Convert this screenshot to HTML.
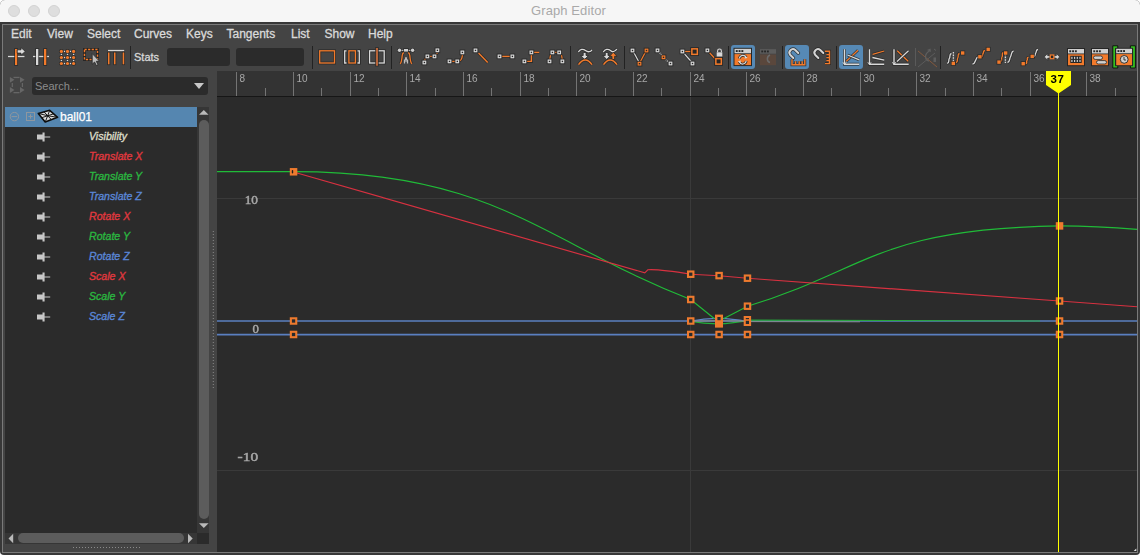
<!DOCTYPE html><html><head><meta charset="utf-8"><title>Graph Editor</title><style>
*{margin:0;padding:0;box-sizing:border-box}
html,body{width:1140px;height:555px;overflow:hidden;background:#ffffff;font-family:"Liberation Sans",sans-serif}
#win{position:absolute;left:0;top:0;width:1140px;height:555px;background:#383838;border-radius:5px 5px 4px 4px;overflow:hidden}
#title{position:absolute;left:0;top:0;width:1140px;height:22px;background:#f6f6f6}
#title .t{position:absolute;left:531px;top:3px;font-size:13px;color:#a9a9a9;letter-spacing:0.1px;white-space:nowrap}
.tl{position:absolute;top:5px;width:12px;height:12px;border-radius:50%;background:#dedede;border:1px solid #d2d2d2}
#frame{position:absolute;left:2px;top:24px;width:1136px;height:529px;border:1px solid #7a7a7a;background:#444444}
.abs{position:absolute}
.menu{position:absolute;top:27px;font-size:12px;color:#dadada;white-space:nowrap;-webkit-text-stroke:0.3px #dadada}
.field{position:absolute;background:#2b2b2b;border-radius:3px}
.sep{position:absolute;width:1.3px;background:#222222}
.row{position:absolute;left:5px;width:192px;height:20px}
.attr{position:absolute;left:89px;font:italic 10.6px "Liberation Sans",sans-serif;white-space:nowrap;-webkit-text-stroke:0.35px currentColor}
</style></head><body><div id="win">
<div id="title"><div class="tl" style="left:8px"></div><div class="tl" style="left:28px"></div><div class="tl" style="left:48px"></div><div class="t">Graph Editor</div></div>
<div id="frame"></div>
<div class="menu" style="left:11px">Edit</div>
<div class="menu" style="left:47px">View</div>
<div class="menu" style="left:87px">Select</div>
<div class="menu" style="left:134px">Curves</div>
<div class="menu" style="left:186px">Keys</div>
<div class="menu" style="left:226.5px">Tangents</div>
<div class="menu" style="left:291px">List</div>
<div class="menu" style="left:324.5px">Show</div>
<div class="menu" style="left:368px">Help</div>
<div class="sep" style="left:130px;top:46px;height:23px"></div>
<div class="sep" style="left:312px;top:46px;height:23px"></div>
<div class="sep" style="left:391px;top:46px;height:23px"></div>
<div class="sep" style="left:570px;top:46px;height:23px"></div>
<div class="sep" style="left:624px;top:46px;height:23px"></div>
<div class="sep" style="left:728px;top:46px;height:23px"></div>
<div class="sep" style="left:782px;top:46px;height:23px"></div>
<div class="sep" style="left:836px;top:46px;height:23px"></div>
<div class="sep" style="left:940px;top:46px;height:23px"></div>
<div class="abs" style="left:134px;top:51px;font-size:11px;color:#d8d8d8;-webkit-text-stroke:0.3px #d8d8d8">Stats</div>
<div class="field" style="left:167px;top:48px;width:63px;height:18px"></div>
<div class="field" style="left:236px;top:48px;width:68px;height:18px"></div>
<div class="field" style="left:32px;top:77px;width:176px;height:18px"></div>
<div class="abs" style="left:35px;top:80px;font-size:11px;color:#8c8c8c">Search...</div>
<svg class="abs" style="left:0;top:0" width="1140" height="555"><line x1="8" y1="56.5" x2="24.5" y2="56.5" stroke="#262626" stroke-opacity="0.8" stroke-width="3.1" stroke-linecap="butt"/><line x1="8" y1="56.5" x2="24.5" y2="56.5" stroke="#d9d9d9" stroke-width="1.5" stroke-linecap="butt"/><rect x="14.2" y="48.2" width="3.8000000000000003" height="17.6" fill="#262626" fill-opacity="0.8"/><rect x="15" y="49" width="2.2" height="16" fill="#f27a2b"/><path d="M17.2,49.8 L21,49.8 L21,47.6 L25.3,51.4 L21,55.2 L21,53.1 L17.2,53.1 Z" fill="#d9d9d9" stroke="#262626" stroke-width="0.8"/><line x1="33" y1="56.5" x2="49" y2="56.5" stroke="#262626" stroke-opacity="0.8" stroke-width="3.1" stroke-linecap="butt"/><line x1="33" y1="56.5" x2="49" y2="56.5" stroke="#d9d9d9" stroke-width="1.5" stroke-linecap="butt"/><rect x="35.2" y="48.2" width="3.9" height="17.6" fill="#262626" fill-opacity="0.8"/><rect x="36" y="49" width="2.3" height="16" fill="#d9d9d9"/><rect x="43.2" y="48.2" width="3.9" height="17.6" fill="#262626" fill-opacity="0.8"/><rect x="44" y="49" width="2.3" height="16" fill="#f27a2b"/><circle cx="61.4" cy="51.4" r="2.3" fill="#262626" fill-opacity="0.8"/><circle cx="61.4" cy="51.4" r="1.6" fill="#f27a2b"/><circle cx="67.5" cy="51.4" r="2.3" fill="#262626" fill-opacity="0.8"/><circle cx="67.5" cy="51.4" r="1.6" fill="#f27a2b"/><circle cx="73.6" cy="51.4" r="2.3" fill="#262626" fill-opacity="0.8"/><circle cx="73.6" cy="51.4" r="1.6" fill="#f27a2b"/><circle cx="61.4" cy="57.5" r="2.3" fill="#262626" fill-opacity="0.8"/><circle cx="61.4" cy="57.5" r="1.6" fill="#f27a2b"/><circle cx="67.5" cy="57.5" r="2.3" fill="#262626" fill-opacity="0.8"/><circle cx="67.5" cy="57.5" r="1.6" fill="#f27a2b"/><circle cx="73.6" cy="57.5" r="2.3" fill="#262626" fill-opacity="0.8"/><circle cx="73.6" cy="57.5" r="1.6" fill="#f27a2b"/><circle cx="61.4" cy="63.5" r="2.3" fill="#262626" fill-opacity="0.8"/><circle cx="61.4" cy="63.5" r="1.6" fill="#f27a2b"/><circle cx="67.5" cy="63.5" r="2.3" fill="#262626" fill-opacity="0.8"/><circle cx="67.5" cy="63.5" r="1.6" fill="#f27a2b"/><circle cx="73.6" cy="63.5" r="2.3" fill="#262626" fill-opacity="0.8"/><circle cx="73.6" cy="63.5" r="1.6" fill="#f27a2b"/><rect x="63.9" y="50.8" width="1.2" height="1.2" fill="#d9d9d9"/><rect x="69.9" y="50.8" width="1.2" height="1.2" fill="#d9d9d9"/><rect x="63.9" y="62.9" width="1.2" height="1.2" fill="#d9d9d9"/><rect x="69.9" y="62.9" width="1.2" height="1.2" fill="#d9d9d9"/><rect x="60.8" y="53.8" width="1.2" height="1.2" fill="#d9d9d9"/><rect x="66.9" y="53.8" width="1.2" height="1.2" fill="#d9d9d9"/><rect x="73.0" y="53.8" width="1.2" height="1.2" fill="#d9d9d9"/><rect x="60.8" y="59.9" width="1.2" height="1.2" fill="#d9d9d9"/><rect x="66.9" y="59.9" width="1.2" height="1.2" fill="#d9d9d9"/><rect x="73.0" y="59.9" width="1.2" height="1.2" fill="#d9d9d9"/><rect x="63.9" y="56.9" width="1.2" height="1.2" fill="#d9d9d9"/><rect x="69.9" y="56.9" width="1.2" height="1.2" fill="#d9d9d9"/><rect x="84.5" y="49.5" width="13" height="10" fill="none" stroke="#262626" stroke-width="3"/><rect x="84.5" y="49.5" width="13" height="10" fill="none" stroke="#f27a2b" stroke-width="1.4" stroke-dasharray="2.2,1.4"/><path d="M92.2,53.6 L92.2,64.2 L94.6,62 L96.4,65.6 L98,64.8 L96.3,61.3 L99.4,61.1 Z" fill="#bdbdbd" stroke="#262626" stroke-width="0.8"/><line x1="108" y1="50.6" x2="124.2" y2="50.6" stroke="#262626" stroke-opacity="0.8" stroke-width="3.1" stroke-linecap="butt"/><line x1="108" y1="50.6" x2="124.2" y2="50.6" stroke="#d9d9d9" stroke-width="1.5" stroke-linecap="butt"/><rect x="107.2" y="51.7" width="3.1" height="13.4" fill="#262626" fill-opacity="0.8"/><rect x="108" y="52.5" width="1.5" height="11.8" fill="#f27a2b"/><rect x="113.2" y="51.7" width="3.1" height="13.4" fill="#262626" fill-opacity="0.8"/><rect x="114" y="52.5" width="1.5" height="11.8" fill="#f27a2b"/><rect x="121.9" y="51.7" width="3.1" height="13.4" fill="#262626" fill-opacity="0.8"/><rect x="122.7" y="52.5" width="1.5" height="11.8" fill="#f27a2b"/><rect x="319.7" y="50.8" width="14.8" height="12.2" fill="none" stroke="#262626" stroke-opacity="0.8" stroke-width="2.9000000000000004"/><rect x="319.7" y="50.8" width="14.8" height="12.2" fill="none" stroke="#f27a2b" stroke-width="1.3"/><path d="M346.5,50.8 L344.7,50.8 L344.7,63 L346.5,63 M357.5,50.8 L359.3,50.8 L359.3,63 L357.5,63" fill="none" stroke="#262626" stroke-width="2.9"/><path d="M346.5,50.8 L344.7,50.8 L344.7,63 L346.5,63 M357.5,50.8 L359.3,50.8 L359.3,63 L357.5,63" fill="none" stroke="#d9d9d9" stroke-width="1.3"/><rect x="348.9" y="50.8" width="6.5" height="12.2" fill="none" stroke="#262626" stroke-opacity="0.8" stroke-width="2.9000000000000004"/><rect x="348.9" y="50.8" width="6.5" height="12.2" fill="none" stroke="#f27a2b" stroke-width="1.3"/><rect x="369.6" y="50.8" width="14.6" height="12.2" fill="none" stroke="#262626" stroke-opacity="0.8" stroke-width="2.9000000000000004"/><rect x="369.6" y="50.8" width="14.6" height="12.2" fill="none" stroke="#d9d9d9" stroke-width="1.3"/><rect x="375.09999999999997" y="47.2" width="3.7" height="19.3" fill="#262626" fill-opacity="0.8"/><rect x="375.9" y="48" width="2.1" height="17.7" fill="#b8653a"/><path d="M400.3,63.8 C401.5,62 402,58 402.2,55.5 C402.4,53.5 403.2,52.6 404,52.3" fill="none" stroke="#262626" stroke-opacity="0.8" stroke-width="2.9000000000000004" stroke-linecap="butt"/><path d="M400.3,63.8 C401.5,62 402,58 402.2,55.5 C402.4,53.5 403.2,52.6 404,52.3" fill="none" stroke="#f27a2b" stroke-width="1.3" stroke-linecap="butt"/><path d="M411.7,63.8 C410.5,62 410,58 409.8,55.5 C409.6,53.5 408.8,52.6 408,52.3" fill="none" stroke="#262626" stroke-opacity="0.8" stroke-width="2.9000000000000004" stroke-linecap="butt"/><path d="M411.7,63.8 C410.5,62 410,58 409.8,55.5 C409.6,53.5 408.8,52.6 408,52.3" fill="none" stroke="#f27a2b" stroke-width="1.3" stroke-linecap="butt"/><line x1="400" y1="50.3" x2="412" y2="50.3" stroke="#262626" stroke-opacity="0.8" stroke-width="2.6" stroke-linecap="butt"/><line x1="400" y1="50.3" x2="412" y2="50.3" stroke="#d9d9d9" stroke-width="1.0" stroke-linecap="butt"/><circle cx="399.5" cy="50.3" r="2.4" fill="#262626" fill-opacity="0.8"/><circle cx="399.5" cy="50.3" r="1.7" fill="#cfcfcf"/><circle cx="412.6" cy="50.3" r="2.4" fill="#262626" fill-opacity="0.8"/><circle cx="412.6" cy="50.3" r="1.7" fill="#cfcfcf"/><rect x="403.2" y="48.2" width="5.6" height="4.2" fill="#262626" fill-opacity="0.8"/><rect x="404" y="49" width="4" height="2.6" fill="#cfcfcf"/><path d="M404.5,63.5 L404.5,60.5 L406,58.5 L407.5,60.5 L407.5,63.5 M405,61 L407,61" fill="none" stroke="#bdbdbd" stroke-width="1.2"/><rect x="405.2" y="57.2" width="1.6" height="1.8" fill="#bdbdbd"/><path d="M424.6,60.5 C424.8,59 425.5,58 426.5,57.2" fill="none" stroke="#262626" stroke-opacity="0.8" stroke-width="2.9000000000000004" stroke-linecap="butt"/><path d="M424.6,60.5 C424.8,59 425.5,58 426.5,57.2" fill="none" stroke="#f27a2b" stroke-width="1.3" stroke-linecap="butt"/><line x1="429.3" y1="56.4" x2="432.6" y2="56.4" stroke="#262626" stroke-opacity="0.8" stroke-width="2.9000000000000004" stroke-linecap="butt"/><line x1="429.3" y1="56.4" x2="432.6" y2="56.4" stroke="#f27a2b" stroke-width="1.3" stroke-linecap="butt"/><path d="M436.3,54.3 C437,53.7 437.3,53 437.5,52.4" fill="none" stroke="#262626" stroke-opacity="0.8" stroke-width="2.9000000000000004" stroke-linecap="butt"/><path d="M436.3,54.3 C437,53.7 437.3,53 437.5,52.4" fill="none" stroke="#f27a2b" stroke-width="1.3" stroke-linecap="butt"/><rect x="421.6" y="59.7" width="5.6" height="5.6" fill="#262626" fill-opacity="0.85"/><rect x="422.5" y="60.6" width="3.8" height="3.8" fill="#d9d9d9"/><rect x="423.7" y="61.8" width="1.4" height="1.4" fill="#262626"/><rect x="424.6" y="53.6" width="5.6" height="5.6" fill="#262626" fill-opacity="0.85"/><rect x="425.5" y="54.5" width="3.8" height="3.8" fill="#d9d9d9"/><rect x="426.7" y="55.699999999999996" width="1.4" height="1.4" fill="#262626"/><rect x="431.70000000000005" y="53.6" width="5.6" height="5.6" fill="#262626" fill-opacity="0.85"/><rect x="432.6" y="54.5" width="3.8" height="3.8" fill="#d9d9d9"/><rect x="433.8" y="55.699999999999996" width="1.4" height="1.4" fill="#262626"/><rect x="434.6" y="47.5" width="5.6" height="5.6" fill="#262626" fill-opacity="0.85"/><rect x="435.5" y="48.4" width="3.8" height="3.8" fill="#d9d9d9"/><rect x="436.7" y="49.599999999999994" width="1.4" height="1.4" fill="#262626"/><line x1="451.8" y1="61.4" x2="455" y2="61.4" stroke="#262626" stroke-opacity="0.8" stroke-width="2.9000000000000004" stroke-linecap="butt"/><line x1="451.8" y1="61.4" x2="455" y2="61.4" stroke="#f27a2b" stroke-width="1.3" stroke-linecap="butt"/><path d="M459.5,61 C461.5,60 462.3,57 462.4,54.5" fill="none" stroke="#262626" stroke-opacity="0.8" stroke-width="2.9000000000000004" stroke-linecap="butt"/><path d="M459.5,61 C461.5,60 462.3,57 462.4,54.5" fill="none" stroke="#f27a2b" stroke-width="1.3" stroke-linecap="butt"/><rect x="446.70000000000005" y="58.6" width="5.6" height="5.6" fill="#262626" fill-opacity="0.85"/><rect x="447.6" y="59.5" width="3.8" height="3.8" fill="#d9d9d9"/><rect x="448.8" y="60.699999999999996" width="1.4" height="1.4" fill="#262626"/><rect x="454.50000000000006" y="58.6" width="5.6" height="5.6" fill="#262626" fill-opacity="0.85"/><rect x="455.40000000000003" y="59.5" width="3.8" height="3.8" fill="#d9d9d9"/><rect x="456.6" y="60.699999999999996" width="1.4" height="1.4" fill="#262626"/><rect x="459.6" y="49.6" width="5.6" height="5.6" fill="#262626" fill-opacity="0.85"/><rect x="460.5" y="50.5" width="3.8" height="3.8" fill="#d9d9d9"/><rect x="461.7" y="51.699999999999996" width="1.4" height="1.4" fill="#262626"/><line x1="478.5" y1="53" x2="487.7" y2="62.5" stroke="#262626" stroke-opacity="0.8" stroke-width="3.0" stroke-linecap="butt"/><line x1="478.5" y1="53" x2="487.7" y2="62.5" stroke="#f27a2b" stroke-width="1.4" stroke-linecap="butt"/><rect x="472.70000000000005" y="47.6" width="5.6" height="5.6" fill="#262626" fill-opacity="0.85"/><rect x="473.6" y="48.5" width="3.8" height="3.8" fill="#d9d9d9"/><rect x="474.8" y="49.699999999999996" width="1.4" height="1.4" fill="#262626"/><line x1="501.7" y1="56.4" x2="510.2" y2="56.4" stroke="#262626" stroke-opacity="0.8" stroke-width="3.0" stroke-linecap="butt"/><line x1="501.7" y1="56.4" x2="510.2" y2="56.4" stroke="#f27a2b" stroke-width="1.4" stroke-linecap="butt"/><rect x="496.70000000000005" y="53.6" width="5.6" height="5.6" fill="#262626" fill-opacity="0.85"/><rect x="497.6" y="54.5" width="3.8" height="3.8" fill="#d9d9d9"/><rect x="498.8" y="55.699999999999996" width="1.4" height="1.4" fill="#262626"/><rect x="509.6" y="53.6" width="5.6" height="5.6" fill="#262626" fill-opacity="0.85"/><rect x="510.5" y="54.5" width="3.8" height="3.8" fill="#d9d9d9"/><rect x="511.7" y="55.699999999999996" width="1.4" height="1.4" fill="#262626"/><path d="M526.6,61.4 L531.4,61.4 L531.4,54.6" fill="none" stroke="#262626" stroke-opacity="0.8" stroke-width="3.0" stroke-linecap="butt"/><path d="M526.6,61.4 L531.4,61.4 L531.4,54.6" fill="none" stroke="#f27a2b" stroke-width="1.4" stroke-linecap="butt"/><line x1="534" y1="52.4" x2="539.2" y2="52.4" stroke="#262626" stroke-opacity="0.8" stroke-width="3.0" stroke-linecap="butt"/><line x1="534" y1="52.4" x2="539.2" y2="52.4" stroke="#f27a2b" stroke-width="1.4" stroke-linecap="butt"/><rect x="521.6" y="58.6" width="5.6" height="5.6" fill="#262626" fill-opacity="0.85"/><rect x="522.5" y="59.5" width="3.8" height="3.8" fill="#d9d9d9"/><rect x="523.6999999999999" y="60.699999999999996" width="1.4" height="1.4" fill="#262626"/><rect x="528.6" y="49.6" width="5.6" height="5.6" fill="#262626" fill-opacity="0.85"/><rect x="529.5" y="50.5" width="3.8" height="3.8" fill="#d9d9d9"/><rect x="530.6999999999999" y="51.699999999999996" width="1.4" height="1.4" fill="#262626"/><line x1="549.8" y1="59.2" x2="550.6" y2="54.8" stroke="#262626" stroke-opacity="0.8" stroke-width="2.8" stroke-linecap="butt"/><line x1="549.8" y1="59.2" x2="550.6" y2="54.8" stroke="#f27a2b" stroke-width="1.2" stroke-linecap="butt"/><line x1="554.7" y1="52.4" x2="557" y2="52.4" stroke="#262626" stroke-opacity="0.8" stroke-width="2.9000000000000004" stroke-linecap="butt"/><line x1="554.7" y1="52.4" x2="557" y2="52.4" stroke="#f27a2b" stroke-width="1.3" stroke-linecap="butt"/><line x1="561.5" y1="54.8" x2="562.2" y2="59.2" stroke="#262626" stroke-opacity="0.8" stroke-width="2.8" stroke-linecap="butt"/><line x1="561.5" y1="54.8" x2="562.2" y2="59.2" stroke="#f27a2b" stroke-width="1.2" stroke-linecap="butt"/><rect x="546.7" y="58.6" width="5.6" height="5.6" fill="#262626" fill-opacity="0.85"/><rect x="547.6" y="59.5" width="3.8" height="3.8" fill="#d9d9d9"/><rect x="548.8" y="60.699999999999996" width="1.4" height="1.4" fill="#262626"/><rect x="549.6" y="49.6" width="5.6" height="5.6" fill="#262626" fill-opacity="0.85"/><rect x="550.5" y="50.5" width="3.8" height="3.8" fill="#d9d9d9"/><rect x="551.6999999999999" y="51.699999999999996" width="1.4" height="1.4" fill="#262626"/><rect x="556.4000000000001" y="49.6" width="5.6" height="5.6" fill="#262626" fill-opacity="0.85"/><rect x="557.3000000000001" y="50.5" width="3.8" height="3.8" fill="#d9d9d9"/><rect x="558.5" y="51.699999999999996" width="1.4" height="1.4" fill="#262626"/><rect x="559.6" y="58.6" width="5.6" height="5.6" fill="#262626" fill-opacity="0.85"/><rect x="560.5" y="59.5" width="3.8" height="3.8" fill="#d9d9d9"/><rect x="561.6999999999999" y="60.699999999999996" width="1.4" height="1.4" fill="#262626"/><path d="M578.4,52 C580,49 583,48.5 585.5,50.5 C588,52.5 590.5,52 592,49.8" fill="none" stroke="#262626" stroke-opacity="0.8" stroke-width="2.9000000000000004" stroke-linecap="butt"/><path d="M578.4,52 C580,49 583,48.5 585.5,50.5 C588,52.5 590.5,52 592,49.8" fill="none" stroke="#d9d9d9" stroke-width="1.3" stroke-linecap="butt"/><path d="M583.2,52.5 L586,52.5 L586,55.5 L588.5,55.5 L584.6,59.5 L580.7,55.5 L583.2,55.5 Z" fill="#d9d9d9" stroke="#262626" stroke-width="0.8"/><path d="M578.5,64.6 Q585.3,55.5 592,64.6" fill="none" stroke="#262626" stroke-opacity="0.8" stroke-width="3.1" stroke-linecap="butt"/><path d="M578.5,64.6 Q585.3,55.5 592,64.6" fill="none" stroke="#f27a2b" stroke-width="1.5" stroke-linecap="butt"/><path d="M603.3,52 C605,49 608,48.5 610.5,50.5 C612,52 613,52.3 614.5,51" fill="none" stroke="#262626" stroke-opacity="0.8" stroke-width="2.9000000000000004" stroke-linecap="butt"/><path d="M603.3,52 C605,49 608,48.5 610.5,50.5 C612,52 613,52.3 614.5,51" fill="none" stroke="#d9d9d9" stroke-width="1.3" stroke-linecap="butt"/><line x1="614.5" y1="51" x2="617" y2="49.2" stroke="#262626" stroke-opacity="0.8" stroke-width="2.7" stroke-linecap="butt"/><line x1="614.5" y1="51" x2="617" y2="49.2" stroke="#d9d9d9" stroke-width="1.1" stroke-linecap="butt"/><path d="M605.3,52.5 L608,52.5 L608,55.5 L610.5,55.5 L606.7,59.5 L602.8,55.5 L605.3,55.5 Z" fill="#d9d9d9" stroke="#262626" stroke-width="0.8"/><path d="M612,59.5 L614.6,59.5 L614.6,56.3 L617,56.3 L613.3,52.3 L609.5,56.3 L612,56.3 Z" fill="#f27a2b" stroke="#262626" stroke-width="0.8"/><path d="M603.5,64.6 Q610.3,55.5 617,64.6" fill="none" stroke="#262626" stroke-opacity="0.8" stroke-width="3.1" stroke-linecap="butt"/><path d="M603.5,64.6 Q610.3,55.5 617,64.6" fill="none" stroke="#f27a2b" stroke-width="1.5" stroke-linecap="butt"/><line x1="633.8" y1="52.5" x2="638.8" y2="61.8" stroke="#262626" stroke-opacity="0.8" stroke-width="2.8" stroke-linecap="butt"/><line x1="633.8" y1="52.5" x2="638.8" y2="61.8" stroke="#d9d9d9" stroke-width="1.2" stroke-linecap="butt"/><line x1="640.3" y1="61.8" x2="645.2" y2="52.5" stroke="#262626" stroke-opacity="0.8" stroke-width="2.8" stroke-linecap="butt"/><line x1="640.3" y1="61.8" x2="645.2" y2="52.5" stroke="#f27a2b" stroke-width="1.2" stroke-linecap="butt"/><rect x="629.7" y="47.7" width="5.6" height="5.6" fill="#262626" fill-opacity="0.85"/><rect x="630.6" y="48.6" width="3.8" height="3.8" fill="#d9d9d9"/><rect x="631.8" y="49.8" width="1.4" height="1.4" fill="#262626"/><rect x="643.7" y="47.7" width="5.6" height="5.6" fill="#262626" fill-opacity="0.85"/><rect x="644.6" y="48.6" width="3.8" height="3.8" fill="#f27a2b"/><rect x="645.8" y="49.8" width="1.4" height="1.4" fill="#262626"/><rect x="636.7" y="60.900000000000006" width="5.6" height="5.6" fill="#262626" fill-opacity="0.85"/><rect x="637.6" y="61.800000000000004" width="3.8" height="3.8" fill="#f27a2b"/><rect x="638.8" y="63.0" width="1.4" height="1.4" fill="#262626"/><path d="M659.5,52.5 L661.8,55.3 M665.3,59.3 L668.6,62" stroke="#d9d9d9" stroke-width="1.2" stroke-dasharray="1.3,0.9"/><rect x="654.7" y="47.6" width="5.6" height="5.6" fill="#262626" fill-opacity="0.85"/><rect x="655.6" y="48.5" width="3.8" height="3.8" fill="#d9d9d9"/><rect x="656.8" y="49.699999999999996" width="1.4" height="1.4" fill="#262626"/><rect x="660.7" y="54.5" width="5.6" height="5.6" fill="#262626" fill-opacity="0.85"/><rect x="661.6" y="55.4" width="3.8" height="3.8" fill="#f27a2b"/><rect x="662.8" y="56.599999999999994" width="1.4" height="1.4" fill="#262626"/><rect x="667.7" y="60.7" width="5.6" height="5.6" fill="#262626" fill-opacity="0.85"/><rect x="668.6" y="61.6" width="3.8" height="3.8" fill="#d9d9d9"/><rect x="669.8" y="62.8" width="1.4" height="1.4" fill="#262626"/><line x1="684.8" y1="51.5" x2="691.3" y2="51.5" stroke="#262626" stroke-opacity="0.8" stroke-width="2.9000000000000004" stroke-linecap="butt"/><line x1="684.8" y1="51.5" x2="691.3" y2="51.5" stroke="#f27a2b" stroke-width="1.3" stroke-linecap="butt"/><line x1="684" y1="53.4" x2="691.3" y2="61.6" stroke="#262626" stroke-opacity="0.8" stroke-width="2.9000000000000004" stroke-linecap="butt"/><line x1="684" y1="53.4" x2="691.3" y2="61.6" stroke="#d9d9d9" stroke-width="1.3" stroke-linecap="butt"/><rect x="679.6" y="48.7" width="5.6" height="5.6" fill="#262626" fill-opacity="0.85"/><rect x="680.5" y="49.6" width="3.8" height="3.8" fill="#d9d9d9"/><rect x="681.6999999999999" y="50.8" width="1.4" height="1.4" fill="#262626"/><rect x="689.7" y="60.7" width="5.6" height="5.6" fill="#262626" fill-opacity="0.85"/><rect x="690.6" y="61.6" width="3.8" height="3.8" fill="#d9d9d9"/><rect x="691.8" y="62.8" width="1.4" height="1.4" fill="#262626"/><rect x="691.85" y="48.85" width="5.5" height="5.5" fill="none" stroke="#262626" stroke-width="3.2"/><rect x="691.85" y="48.85" width="5.5" height="5.5" fill="#262626" stroke="#f27a2b" stroke-width="1.5"/><line x1="709.2" y1="52.2" x2="715.3" y2="59" stroke="#262626" stroke-opacity="0.8" stroke-width="2.9000000000000004" stroke-linecap="butt"/><line x1="709.2" y1="52.2" x2="715.3" y2="59" stroke="#f27a2b" stroke-width="1.3" stroke-linecap="butt"/><rect x="704.6" y="47.6" width="5.6" height="5.6" fill="#262626" fill-opacity="0.85"/><rect x="705.5" y="48.5" width="3.8" height="3.8" fill="#d9d9d9"/><rect x="706.6999999999999" y="49.699999999999996" width="1.4" height="1.4" fill="#262626"/><rect x="715.85" y="58.65" width="5.5" height="5.5" fill="none" stroke="#262626" stroke-width="3.2"/><rect x="715.85" y="58.65" width="5.5" height="5.5" fill="#262626" stroke="#f27a2b" stroke-width="1.5"/><path d="M717.6,52.3 L717.6,50.9 A1.9,1.9 0 0 1 721.4,50.9 L721.4,52.3" fill="none" stroke="#d9d9d9" stroke-width="1.1"/><rect x="716.7" y="52.3" width="5.6" height="4.2" fill="#d9d9d9"/><rect x="731" y="45" width="24" height="24" rx="3" fill="#5689b5"/><rect x="785" y="45" width="24" height="24" rx="3" fill="#5689b5"/><rect x="839" y="45" width="24" height="24" rx="3" fill="#5689b5"/><rect x="733.5" y="47.8" width="18.5" height="18.3" fill="#262626"/><rect x="734.5" y="48.8" width="16.5" height="4.5" fill="#cfcfcf"/><rect x="734.5" y="54.099999999999994" width="16.5" height="11.0" fill="#f27a2b"/><rect x="735.8" y="50.099999999999994" width="1.9" height="1.9" fill="#262626"/><rect x="738.5999999999999" y="50.099999999999994" width="1.9" height="1.9" fill="#262626"/><rect x="741.4" y="50.099999999999994" width="1.9" height="1.9" fill="#262626"/><path d="M739.4,58.5 A3.6,3.6 0 0 1 746.2,57.4 M746.2,60.8 A3.6,3.6 0 0 1 739.3,61.8" fill="none" stroke="#262626" stroke-width="2.6"/><path d="M739.4,58.5 A3.6,3.6 0 0 1 746.2,57.4 M746.2,60.8 A3.6,3.6 0 0 1 739.3,61.8" fill="none" stroke="#d9d9d9" stroke-width="1.2"/><path d="M745,55.6 L747.6,57.9 L744.6,58.6 Z M740.5,63.6 L737.9,61.3 L740.9,60.6 Z" fill="#d9d9d9"/><rect x="760" y="49.2" width="16" height="4.5" fill="#5c5c5c"/><rect x="760" y="54.5" width="16" height="10.7" fill="#5a473c"/><rect x="761.3" y="50.5" width="1.9" height="1.9" fill="#262626"/><rect x="764.0999999999999" y="50.5" width="1.9" height="1.9" fill="#262626"/><rect x="766.9" y="50.5" width="1.9" height="1.9" fill="#262626"/><path d="M770,55 C766.5,56.5 766.5,61.5 770,62.5" fill="none" stroke="#6a6a6a" stroke-width="1.5"/><path d="M793.37,58.01 L790.33,54.97 A3.5,3.5 0 0 1 795.27,50.03 L798.31,53.07" fill="none" stroke="#262626" stroke-opacity="0.85" stroke-width="3.6" stroke-linecap="round"/><path d="M793.37,58.01 L790.33,54.97 A3.5,3.5 0 0 1 795.27,50.03 L798.31,53.07" fill="none" stroke="#d4d4d4" stroke-width="2" stroke-linecap="round"/><path d="M792,59.2 L792,64.8 L804.8,64.8 L804.8,59.2 M795.6,64.8 L795.6,61.2 M799.2,64.8 L799.2,61.2 M802.2,64.8 L802.2,61.2" fill="none" stroke="#262626" stroke-opacity="0.8" stroke-width="3.0" stroke-linecap="butt"/><path d="M792,59.2 L792,64.8 L804.8,64.8 L804.8,59.2 M795.6,64.8 L795.6,61.2 M799.2,64.8 L799.2,61.2 M802.2,64.8 L802.2,61.2" fill="none" stroke="#f27a2b" stroke-width="1.4" stroke-linecap="butt"/><path d="M818.37,58.01 L815.33,54.97 A3.5,3.5 0 0 1 820.27,50.03 L823.31,53.07" fill="none" stroke="#262626" stroke-opacity="0.85" stroke-width="3.6" stroke-linecap="round"/><path d="M818.37,58.01 L815.33,54.97 A3.5,3.5 0 0 1 820.27,50.03 L823.31,53.07" fill="none" stroke="#d4d4d4" stroke-width="2" stroke-linecap="round"/><path d="M825,51.2 L829.5,51.2 L829.5,63.6 L825,63.6 M829.5,54.6 L826.4,54.6 M829.5,57.6 L826.4,57.6 M829.5,60.6 L826.4,60.6" fill="none" stroke="#262626" stroke-opacity="0.8" stroke-width="3.0" stroke-linecap="butt"/><path d="M825,51.2 L829.5,51.2 L829.5,63.6 L825,63.6 M829.5,54.6 L826.4,54.6 M829.5,57.6 L826.4,57.6 M829.5,60.6 L826.4,60.6" fill="none" stroke="#f27a2b" stroke-width="1.4" stroke-linecap="butt"/><path d="M844.5,49.2 L844.5,64.3 L859.2,64.3" fill="none" stroke="#262626" stroke-opacity="0.8" stroke-width="3.0" stroke-linecap="butt"/><path d="M844.5,49.2 L844.5,64.3 L859.2,64.3" fill="none" stroke="#d9d9d9" stroke-width="1.4" stroke-linecap="butt"/><path d="M842.9,62.3 L844.5,64.5 L846.1,62.3" fill="none" stroke="#d9d9d9" stroke-width="1"/><line x1="846.3" y1="61.2" x2="858" y2="50.3" stroke="#262626" stroke-opacity="0.8" stroke-width="2.8" stroke-linecap="butt"/><line x1="846.3" y1="61.2" x2="858" y2="50.3" stroke="#f27a2b" stroke-width="1.2" stroke-linecap="butt"/><line x1="847.5" y1="55" x2="859.3" y2="59.8" stroke="#262626" stroke-opacity="0.8" stroke-width="2.9000000000000004" stroke-linecap="butt"/><line x1="847.5" y1="55" x2="859.3" y2="59.8" stroke="#d9d9d9" stroke-width="1.3" stroke-linecap="butt"/><path d="M869.5,49.2 L869.5,64.3 L884.2,64.3" fill="none" stroke="#262626" stroke-opacity="0.8" stroke-width="3.0" stroke-linecap="butt"/><path d="M869.5,49.2 L869.5,64.3 L884.2,64.3" fill="none" stroke="#d9d9d9" stroke-width="1.4" stroke-linecap="butt"/><path d="M867.9,62.3 L869.5,64.5 L871.1,62.3" fill="none" stroke="#d9d9d9" stroke-width="1"/><line x1="872.6" y1="54.4" x2="884.2" y2="51" stroke="#262626" stroke-opacity="0.8" stroke-width="2.8" stroke-linecap="butt"/><line x1="872.6" y1="54.4" x2="884.2" y2="51" stroke="#f27a2b" stroke-width="1.2" stroke-linecap="butt"/><line x1="872.4" y1="57.5" x2="884.3" y2="60.2" stroke="#262626" stroke-opacity="0.8" stroke-width="2.9000000000000004" stroke-linecap="butt"/><line x1="872.4" y1="57.5" x2="884.3" y2="60.2" stroke="#d9d9d9" stroke-width="1.3" stroke-linecap="butt"/><path d="M894,49.2 L894,64.3 L908.7,64.3" fill="none" stroke="#262626" stroke-opacity="0.8" stroke-width="3.0" stroke-linecap="butt"/><path d="M894,49.2 L894,64.3 L908.7,64.3" fill="none" stroke="#d9d9d9" stroke-width="1.4" stroke-linecap="butt"/><path d="M892.4,62.3 L894,64.5 L895.6,62.3" fill="none" stroke="#d9d9d9" stroke-width="1"/><line x1="897.2" y1="50.8" x2="908.2" y2="61.2" stroke="#262626" stroke-opacity="0.8" stroke-width="2.8" stroke-linecap="butt"/><line x1="897.2" y1="50.8" x2="908.2" y2="61.2" stroke="#f27a2b" stroke-width="1.2" stroke-linecap="butt"/><line x1="897" y1="61.5" x2="908.5" y2="50.8" stroke="#262626" stroke-opacity="0.8" stroke-width="2.8" stroke-linecap="butt"/><line x1="897" y1="61.5" x2="908.5" y2="50.8" stroke="#d9d9d9" stroke-width="1.2" stroke-linecap="butt"/><rect x="915" y="48" width="1" height="18" fill="#5a5a5a"/><line x1="918" y1="51" x2="937" y2="67" stroke="#8a5a3c" stroke-width="0.9"/><line x1="918" y1="67" x2="935" y2="53" stroke="#5e5e5e" stroke-width="0.9"/><path d="M929.5,51 C924,54 924.5,60 929,61" fill="none" stroke="#5e5e5e" stroke-width="1.3"/><path d="M927,50 L930.5,48.5 L931,52 Z" fill="#5e5e5e"/><rect x="933.5" y="57.5" width="2.5" height="4.5" fill="#5e5e5e"/><path d="M934,49 L936,50.5" stroke="#5e5e5e" stroke-width="1"/><path d="M947.2,63.4 C949.8000000000001,62.8 948.0500000000001,60.45 949.35,58.45 C950.65,56.45 948.9,54.1 951.5,53.5" fill="none" stroke="#262626" stroke-opacity="0.8" stroke-width="2.9000000000000004" stroke-linecap="butt"/><path d="M947.2,63.4 C949.8000000000001,62.8 948.0500000000001,60.45 949.35,58.45 C950.65,56.45 948.9,54.1 951.5,53.5" fill="none" stroke="#d9d9d9" stroke-width="1.3" stroke-linecap="butt"/><path d="M953.4,52 L953.4,61.5" stroke="#d9d9d9" stroke-width="1.3" stroke-dasharray="1.6,1"/><path d="M956,62.5 C958.6,61.9 956.45,60.0 957.75,58.0 C959.05,56.0 956.9,54.1 959.5,53.5" fill="none" stroke="#262626" stroke-opacity="0.8" stroke-width="2.9000000000000004" stroke-linecap="butt"/><path d="M956,62.5 C958.6,61.9 956.45,60.0 957.75,58.0 C959.05,56.0 956.9,54.1 959.5,53.5" fill="none" stroke="#f27a2b" stroke-width="1.3" stroke-linecap="butt"/><rect x="950.8000000000001" y="60.900000000000006" width="5.0" height="5.0" fill="#262626" fill-opacity="0.8"/><rect x="951.6" y="61.7" width="3.4" height="3.4" fill="#f27a2b"/><rect x="960.2" y="50.5" width="5.0" height="5.0" fill="#262626" fill-opacity="0.8"/><rect x="961" y="51.3" width="3.4" height="3.4" fill="#f27a2b"/><path d="M972.5,64.2 C975.1,63.6 974.2,62.6 975.5,60.6 C976.8,58.6 975.9,57.6 978.5,57" fill="none" stroke="#262626" stroke-opacity="0.8" stroke-width="2.9000000000000004" stroke-linecap="butt"/><path d="M972.5,64.2 C975.1,63.6 974.2,62.6 975.5,60.6 C976.8,58.6 975.9,57.6 978.5,57" fill="none" stroke="#d9d9d9" stroke-width="1.3" stroke-linecap="butt"/><path d="M981,56.8 C983.6,56.199999999999996 981.7,55.65 983.0,53.65 C984.3,51.65 982.4,51.1 985,50.5" fill="none" stroke="#262626" stroke-opacity="0.8" stroke-width="2.9000000000000004" stroke-linecap="butt"/><path d="M981,56.8 C983.6,56.199999999999996 981.7,55.65 983.0,53.65 C984.3,51.65 982.4,51.1 985,50.5" fill="none" stroke="#f27a2b" stroke-width="1.3" stroke-linecap="butt"/><rect x="977.4000000000001" y="54.300000000000004" width="5.0" height="5.0" fill="#262626" fill-opacity="0.8"/><rect x="978.2" y="55.1" width="3.4" height="3.4" fill="#f27a2b"/><rect x="985.7" y="46.900000000000006" width="5.0" height="5.0" fill="#262626" fill-opacity="0.8"/><rect x="986.5" y="47.7" width="3.4" height="3.4" fill="#f27a2b"/><path d="M1000.5,61.5 C1003.1,60.9 1000.7,59.0 1002.0,57.0 C1003.3,55.0 1000.9,53.1 1003.5,52.5" fill="none" stroke="#262626" stroke-opacity="0.8" stroke-width="2.9000000000000004" stroke-linecap="butt"/><path d="M1000.5,61.5 C1003.1,60.9 1000.7,59.0 1002.0,57.0 C1003.3,55.0 1000.9,53.1 1003.5,52.5" fill="none" stroke="#f27a2b" stroke-width="1.3" stroke-linecap="butt"/><path d="M1005.4,54 L1005.4,63" stroke="#d9d9d9" stroke-width="1.3" stroke-dasharray="1.6,1"/><path d="M1007.5,62.5 C1010.1,61.9 1009.2,58.75 1010.5,56.75 C1011.8,54.75 1010.9,51.6 1013.5,51" fill="none" stroke="#262626" stroke-opacity="0.8" stroke-width="2.9000000000000004" stroke-linecap="butt"/><path d="M1007.5,62.5 C1010.1,61.9 1009.2,58.75 1010.5,56.75 C1011.8,54.75 1010.9,51.6 1013.5,51" fill="none" stroke="#d9d9d9" stroke-width="1.3" stroke-linecap="butt"/><rect x="996.5" y="59.6" width="5.0" height="5.0" fill="#262626" fill-opacity="0.8"/><rect x="997.3" y="60.4" width="3.4" height="3.4" fill="#f27a2b"/><rect x="1003.2" y="50.5" width="5.0" height="5.0" fill="#262626" fill-opacity="0.8"/><rect x="1004" y="51.3" width="3.4" height="3.4" fill="#f27a2b"/><path d="M1025.5,63.5 C1028.1,62.9 1025.7,62.4 1027.0,60.4 C1028.3,58.4 1025.9,57.9 1028.5,57.3" fill="none" stroke="#262626" stroke-opacity="0.8" stroke-width="2.9000000000000004" stroke-linecap="butt"/><path d="M1025.5,63.5 C1028.1,62.9 1025.7,62.4 1027.0,60.4 C1028.3,58.4 1025.9,57.9 1028.5,57.3" fill="none" stroke="#f27a2b" stroke-width="1.3" stroke-linecap="butt"/><path d="M1033.5,56.5 C1036.1,55.9 1034.45,55.0 1035.75,53.0 C1037.05,51.0 1035.4,50.1 1038,49.5" fill="none" stroke="#262626" stroke-opacity="0.8" stroke-width="2.9000000000000004" stroke-linecap="butt"/><path d="M1033.5,56.5 C1036.1,55.9 1034.45,55.0 1035.75,53.0 C1037.05,51.0 1035.4,50.1 1038,49.5" fill="none" stroke="#d9d9d9" stroke-width="1.3" stroke-linecap="butt"/><rect x="1020.7" y="61.2" width="5.0" height="5.0" fill="#262626" fill-opacity="0.8"/><rect x="1021.5" y="62" width="3.4" height="3.4" fill="#f27a2b"/><rect x="1029.7" y="53.900000000000006" width="5.0" height="5.0" fill="#262626" fill-opacity="0.8"/><rect x="1030.5" y="54.7" width="3.4" height="3.4" fill="#f27a2b"/><path d="M1044.3,56.9 L1047.7,53.5 L1047.7,55.7 L1050,55.7 L1050,58.1 L1047.7,58.1 L1047.7,60.3 Z" fill="#d9d9d9" stroke="#262626" stroke-width="0.7"/><path d="M1059.7,56.9 L1056.3,53.5 L1056.3,55.7 L1054,55.7 L1054,58.1 L1056.3,58.1 L1056.3,60.3 Z" fill="#d9d9d9" stroke="#262626" stroke-width="0.7"/><rect x="1050.3" y="55" width="3.5" height="3.7" fill="#262626" stroke="#f27a2b" stroke-width="1.2"/><rect x="1067" y="48" width="18" height="18.2" fill="#262626"/><rect x="1068" y="49" width="16" height="4.5" fill="#cfcfcf"/><rect x="1068" y="54.3" width="16" height="10.899999999999999" fill="#f27a2b"/><rect x="1069.3" y="50.3" width="1.9" height="1.9" fill="#262626"/><rect x="1072.1" y="50.3" width="1.9" height="1.9" fill="#262626"/><rect x="1074.8999999999999" y="50.3" width="1.9" height="1.9" fill="#262626"/><rect x="1070.3" y="55.8" width="11.4" height="7.2" fill="#262626"/><rect x="1071.3" y="56.8" width="1.2" height="2.1" fill="#d0d0d0"/><rect x="1074.0" y="56.8" width="1.2" height="2.1" fill="#d0d0d0"/><rect x="1076.7" y="56.8" width="1.2" height="2.1" fill="#d0d0d0"/><rect x="1079.3999999999999" y="56.8" width="1.2" height="2.1" fill="#d0d0d0"/><rect x="1071.3" y="59.9" width="1.2" height="2.1" fill="#d0d0d0"/><rect x="1074.0" y="59.9" width="1.2" height="2.1" fill="#d0d0d0"/><rect x="1076.7" y="59.9" width="1.2" height="2.1" fill="#d0d0d0"/><rect x="1079.3999999999999" y="59.9" width="1.2" height="2.1" fill="#d0d0d0"/><rect x="1091" y="48" width="18" height="18.2" fill="#262626"/><rect x="1092" y="49" width="16" height="4.5" fill="#cfcfcf"/><rect x="1092" y="54.3" width="16" height="10.899999999999999" fill="#f27a2b"/><rect x="1093.3" y="50.3" width="1.9" height="1.9" fill="#262626"/><rect x="1096.1" y="50.3" width="1.9" height="1.9" fill="#262626"/><rect x="1098.8999999999999" y="50.3" width="1.9" height="1.9" fill="#262626"/><rect x="1093.5" y="56" width="9" height="3.4" rx="1.7" fill="#d0d0d0" stroke="#262626" stroke-width="0.8"/><rect x="1096.5" y="60.6" width="10" height="3.4" rx="1.7" fill="#d0d0d0" stroke="#262626" stroke-width="0.8"/><path d="M1112.8,45.8 L1117.8,45.8 L1117.8,48.6 L1115.6,48.6 L1115.6,65.2 L1117.8,65.2 L1117.8,68 L1112.8,68 Z" fill="#35c01e" stroke="#111" stroke-width="1"/><path d="M1135.4,45.8 L1130.4,45.8 L1130.4,48.6 L1132.6,48.6 L1132.6,65.2 L1130.4,65.2 L1130.4,68 L1135.4,68 Z" fill="#35c01e" stroke="#111" stroke-width="1"/><rect x="1115.2" y="47.8" width="17.8" height="18.4" fill="#262626"/><rect x="1116.2" y="48.8" width="15.8" height="4.5" fill="#cfcfcf"/><rect x="1116.2" y="54.099999999999994" width="15.8" height="11.099999999999998" fill="#f27a2b"/><rect x="1117.5" y="50.099999999999994" width="1.9" height="1.9" fill="#262626"/><rect x="1120.3" y="50.099999999999994" width="1.9" height="1.9" fill="#262626"/><rect x="1123.1" y="50.099999999999994" width="1.9" height="1.9" fill="#262626"/><circle cx="1124.2" cy="59.4" r="3.9" fill="#d0d0d0" stroke="#262626" stroke-width="0.9"/><path d="M1124,57 L1124,60 L1126,60" fill="none" stroke="#262626" stroke-width="0.9"/>
<polygon points="194,83 204,83 199,89" fill="#c8c8c8"/>
</svg>
<div class="abs" style="left:5px;top:107px;width:192px;height:426px;background:#2b2b2b"></div>
<div class="abs" style="left:5px;top:107px;width:192px;height:20px;background:#5586b0"></div>
<div class="abs" style="left:60px;top:110px;font-size:12px;color:#ffffff;-webkit-text-stroke:0.25px #fff">ball01</div>
<div class="attr" style="top:130px;color:#dcdcc8">Visibility</div>
<div class="attr" style="top:150px;color:#e0383f">Translate X</div>
<div class="attr" style="top:170px;color:#2ab640">Translate Y</div>
<div class="attr" style="top:190px;color:#5a86d6">Translate Z</div>
<div class="attr" style="top:210px;color:#e0383f">Rotate X</div>
<div class="attr" style="top:230px;color:#2ab640">Rotate Y</div>
<div class="attr" style="top:250px;color:#5a86d6">Rotate Z</div>
<div class="attr" style="top:270px;color:#e0383f">Scale X</div>
<div class="attr" style="top:290px;color:#2ab640">Scale Y</div>
<div class="attr" style="top:310px;color:#5a86d6">Scale Z</div>
<div class="abs" style="left:197px;top:107px;width:12px;height:437px;background:#363636"></div>
<div class="abs" style="left:199px;top:120px;width:10px;height:399px;border-radius:5px;background:#5c5c5c"></div>
<div class="abs" style="left:5px;top:533px;width:192px;height:11px;background:#363636"></div>
<div class="abs" style="left:18px;top:533px;width:166px;height:10px;border-radius:5px;background:#5c5c5c"></div>
<div class="abs" style="left:197px;top:533px;width:12px;height:11px;background:#2b2b2b"></div>
<svg class="abs" style="left:0;top:0" width="1140" height="555"><path d="M9.9,76.9 L14.5,79.85000000000001 L9.9,82.80000000000001 Z" fill="#666666"/><path d="M20,76.9 L24.6,79.85000000000001 L20,82.80000000000001 Z" fill="#666666"/><path d="M9.9,87 L14.5,89.95 L9.9,92.9 Z" fill="#666666"/><path d="M20,87 L24.6,89.95 L20,92.9 Z" fill="#666666"/><rect x="13.5" y="76.8" width="6" height="1.3" fill="#666666"/><rect x="13.5" y="92" width="6" height="1.3" fill="#666666"/><rect x="11.7" y="83" width="1.2" height="4" fill="#666666"/><rect x="21.8" y="83" width="1.2" height="4" fill="#666666"/><circle cx="14.4" cy="116.6" r="4.2" fill="none" stroke="#8f979f" stroke-width="1"/><line x1="11.6" y1="116.6" x2="17.2" y2="116.6" stroke="#8f979f" stroke-width="1"/><rect x="26.5" y="112.5" width="8" height="8" fill="none" stroke="#8f979f" stroke-width="1"/><line x1="28.3" y1="116.5" x2="32.7" y2="116.5" stroke="#8f979f" stroke-width="1"/><line x1="30.5" y1="114.3" x2="30.5" y2="118.7" stroke="#8f979f" stroke-width="1"/><polygon points="38.3,113.4 49.7,110.3 57.6,117.3 45.2,122.0" fill="#dcdcdc" stroke="#0c0c0c" stroke-width="1.6" stroke-linejoin="round"/><path d="M47.70,115.75 L38.30,113.40 M47.70,115.75 L49.70,110.30 M47.70,115.75 L57.60,117.30 M47.70,115.75 L45.20,122.00 M47.70,115.75 L44.00,111.85 M47.70,115.75 L53.65,113.80 M47.70,115.75 L51.40,119.65 M47.70,115.75 L41.75,117.70" stroke="#111" stroke-width="0.95"/><path d="M37,134.5 L42.5,134.5 L42.5,132.5 L44.6,132.5 L44.6,136.4 L50.2,136.4 L50.2,137.6 L44.6,137.6 L44.6,141.5 L42.5,141.5 L42.5,139.5 L37,139.5 Z" transform="translate(0,0)" fill="#c8c8c8"/><path d="M37,134.5 L42.5,134.5 L42.5,132.5 L44.6,132.5 L44.6,136.4 L50.2,136.4 L50.2,137.6 L44.6,137.6 L44.6,141.5 L42.5,141.5 L42.5,139.5 L37,139.5 Z" transform="translate(0,20)" fill="#c8c8c8"/><path d="M37,134.5 L42.5,134.5 L42.5,132.5 L44.6,132.5 L44.6,136.4 L50.2,136.4 L50.2,137.6 L44.6,137.6 L44.6,141.5 L42.5,141.5 L42.5,139.5 L37,139.5 Z" transform="translate(0,40)" fill="#c8c8c8"/><path d="M37,134.5 L42.5,134.5 L42.5,132.5 L44.6,132.5 L44.6,136.4 L50.2,136.4 L50.2,137.6 L44.6,137.6 L44.6,141.5 L42.5,141.5 L42.5,139.5 L37,139.5 Z" transform="translate(0,60)" fill="#c8c8c8"/><path d="M37,134.5 L42.5,134.5 L42.5,132.5 L44.6,132.5 L44.6,136.4 L50.2,136.4 L50.2,137.6 L44.6,137.6 L44.6,141.5 L42.5,141.5 L42.5,139.5 L37,139.5 Z" transform="translate(0,80)" fill="#c8c8c8"/><path d="M37,134.5 L42.5,134.5 L42.5,132.5 L44.6,132.5 L44.6,136.4 L50.2,136.4 L50.2,137.6 L44.6,137.6 L44.6,141.5 L42.5,141.5 L42.5,139.5 L37,139.5 Z" transform="translate(0,100)" fill="#c8c8c8"/><path d="M37,134.5 L42.5,134.5 L42.5,132.5 L44.6,132.5 L44.6,136.4 L50.2,136.4 L50.2,137.6 L44.6,137.6 L44.6,141.5 L42.5,141.5 L42.5,139.5 L37,139.5 Z" transform="translate(0,120)" fill="#c8c8c8"/><path d="M37,134.5 L42.5,134.5 L42.5,132.5 L44.6,132.5 L44.6,136.4 L50.2,136.4 L50.2,137.6 L44.6,137.6 L44.6,141.5 L42.5,141.5 L42.5,139.5 L37,139.5 Z" transform="translate(0,140)" fill="#c8c8c8"/><path d="M37,134.5 L42.5,134.5 L42.5,132.5 L44.6,132.5 L44.6,136.4 L50.2,136.4 L50.2,137.6 L44.6,137.6 L44.6,141.5 L42.5,141.5 L42.5,139.5 L37,139.5 Z" transform="translate(0,160)" fill="#c8c8c8"/><path d="M37,134.5 L42.5,134.5 L42.5,132.5 L44.6,132.5 L44.6,136.4 L50.2,136.4 L50.2,137.6 L44.6,137.6 L44.6,141.5 L42.5,141.5 L42.5,139.5 L37,139.5 Z" transform="translate(0,180)" fill="#c8c8c8"/><polygon points="199,114.8 208.6,114.8 203.8,110" fill="#bababa"/><polygon points="199,523.3 208.6,523.3 203.8,528.1" fill="#bababa"/><polygon points="13.2,533.8 13.2,543.2 8.5,538.5" fill="#bababa"/><polygon points="188,533.8 188,543.2 192.7,538.5" fill="#bababa"/><rect x="212.8" y="231" width="1" height="1" fill="#8a8a8a"/><rect x="212.8" y="234" width="1" height="1" fill="#8a8a8a"/><rect x="212.8" y="237" width="1" height="1" fill="#8a8a8a"/><rect x="212.8" y="240" width="1" height="1" fill="#8a8a8a"/><rect x="212.8" y="243" width="1" height="1" fill="#8a8a8a"/><rect x="212.8" y="246" width="1" height="1" fill="#8a8a8a"/><rect x="212.8" y="249" width="1" height="1" fill="#8a8a8a"/><rect x="212.8" y="252" width="1" height="1" fill="#8a8a8a"/><rect x="212.8" y="255" width="1" height="1" fill="#8a8a8a"/><rect x="212.8" y="258" width="1" height="1" fill="#8a8a8a"/><rect x="212.8" y="261" width="1" height="1" fill="#8a8a8a"/><rect x="212.8" y="264" width="1" height="1" fill="#8a8a8a"/><rect x="212.8" y="267" width="1" height="1" fill="#8a8a8a"/><rect x="212.8" y="270" width="1" height="1" fill="#8a8a8a"/><rect x="212.8" y="273" width="1" height="1" fill="#8a8a8a"/><rect x="212.8" y="276" width="1" height="1" fill="#8a8a8a"/><rect x="212.8" y="279" width="1" height="1" fill="#8a8a8a"/><rect x="212.8" y="282" width="1" height="1" fill="#8a8a8a"/><rect x="212.8" y="285" width="1" height="1" fill="#8a8a8a"/><rect x="212.8" y="288" width="1" height="1" fill="#8a8a8a"/><rect x="212.8" y="291" width="1" height="1" fill="#8a8a8a"/><rect x="212.8" y="294" width="1" height="1" fill="#8a8a8a"/><rect x="212.8" y="297" width="1" height="1" fill="#8a8a8a"/><rect x="212.8" y="300" width="1" height="1" fill="#8a8a8a"/><rect x="212.8" y="303" width="1" height="1" fill="#8a8a8a"/><rect x="212.8" y="306" width="1" height="1" fill="#8a8a8a"/><rect x="212.8" y="309" width="1" height="1" fill="#8a8a8a"/><rect x="212.8" y="312" width="1" height="1" fill="#8a8a8a"/><rect x="212.8" y="315" width="1" height="1" fill="#8a8a8a"/><rect x="212.8" y="318" width="1" height="1" fill="#8a8a8a"/><rect x="212.8" y="321" width="1" height="1" fill="#8a8a8a"/><rect x="212.8" y="324" width="1" height="1" fill="#8a8a8a"/><rect x="212.8" y="327" width="1" height="1" fill="#8a8a8a"/><rect x="212.8" y="330" width="1" height="1" fill="#8a8a8a"/><rect x="212.8" y="333" width="1" height="1" fill="#8a8a8a"/><rect x="212.8" y="336" width="1" height="1" fill="#8a8a8a"/><rect x="212.8" y="339" width="1" height="1" fill="#8a8a8a"/><rect x="212.8" y="342" width="1" height="1" fill="#8a8a8a"/><rect x="212.8" y="345" width="1" height="1" fill="#8a8a8a"/><rect x="212.8" y="348" width="1" height="1" fill="#8a8a8a"/><rect x="212.8" y="351" width="1" height="1" fill="#8a8a8a"/><rect x="212.8" y="354" width="1" height="1" fill="#8a8a8a"/><rect x="212.8" y="357" width="1" height="1" fill="#8a8a8a"/><rect x="212.8" y="360" width="1" height="1" fill="#8a8a8a"/><rect x="212.8" y="363" width="1" height="1" fill="#8a8a8a"/><rect x="212.8" y="366" width="1" height="1" fill="#8a8a8a"/><rect x="212.8" y="369" width="1" height="1" fill="#8a8a8a"/><rect x="212.8" y="372" width="1" height="1" fill="#8a8a8a"/><rect x="212.8" y="375" width="1" height="1" fill="#8a8a8a"/><rect x="212.8" y="378" width="1" height="1" fill="#8a8a8a"/><rect x="212.8" y="381" width="1" height="1" fill="#8a8a8a"/><rect x="212.8" y="384" width="1" height="1" fill="#8a8a8a"/><rect x="212.8" y="387" width="1" height="1" fill="#8a8a8a"/><rect x="73" y="547" width="1" height="1" fill="#8a8a8a"/><rect x="76" y="547" width="1" height="1" fill="#8a8a8a"/><rect x="79" y="547" width="1" height="1" fill="#8a8a8a"/><rect x="82" y="547" width="1" height="1" fill="#8a8a8a"/><rect x="85" y="547" width="1" height="1" fill="#8a8a8a"/><rect x="88" y="547" width="1" height="1" fill="#8a8a8a"/><rect x="91" y="547" width="1" height="1" fill="#8a8a8a"/><rect x="94" y="547" width="1" height="1" fill="#8a8a8a"/><rect x="97" y="547" width="1" height="1" fill="#8a8a8a"/><rect x="100" y="547" width="1" height="1" fill="#8a8a8a"/><rect x="103" y="547" width="1" height="1" fill="#8a8a8a"/><rect x="106" y="547" width="1" height="1" fill="#8a8a8a"/><rect x="109" y="547" width="1" height="1" fill="#8a8a8a"/><rect x="112" y="547" width="1" height="1" fill="#8a8a8a"/><rect x="115" y="547" width="1" height="1" fill="#8a8a8a"/><rect x="118" y="547" width="1" height="1" fill="#8a8a8a"/><rect x="121" y="547" width="1" height="1" fill="#8a8a8a"/><rect x="124" y="547" width="1" height="1" fill="#8a8a8a"/><rect x="127" y="547" width="1" height="1" fill="#8a8a8a"/><rect x="130" y="547" width="1" height="1" fill="#8a8a8a"/><rect x="133" y="547" width="1" height="1" fill="#8a8a8a"/><rect x="136" y="547" width="1" height="1" fill="#8a8a8a"/><rect x="139" y="547" width="1" height="1" fill="#8a8a8a"/></svg>
<svg class="abs" style="left:0;top:0;will-change:transform" width="1140" height="555" viewBox="0 0 1140 555"><rect x="217" y="71" width="920" height="25" fill="#333333"/><rect x="217" y="96" width="920" height="1.2" fill="#161616"/><rect x="217" y="97" width="920" height="455" fill="#2b2b2b"/><line x1="236.5" y1="72" x2="236.5" y2="96" stroke="#747474" stroke-width="1"/><text x="239.5" y="82" font-size="10" fill="#a8a8a8" font-family="Liberation Sans">8</text><line x1="265.5" y1="88" x2="265.5" y2="96" stroke="#747474" stroke-width="1"/><line x1="293.5" y1="72" x2="293.5" y2="96" stroke="#747474" stroke-width="1"/><text x="296.5" y="82" font-size="10" fill="#a8a8a8" font-family="Liberation Sans">10</text><line x1="321.5" y1="88" x2="321.5" y2="96" stroke="#747474" stroke-width="1"/><line x1="350.5" y1="72" x2="350.5" y2="96" stroke="#747474" stroke-width="1"/><text x="353.5" y="82" font-size="10" fill="#a8a8a8" font-family="Liberation Sans">12</text><line x1="378.5" y1="88" x2="378.5" y2="96" stroke="#747474" stroke-width="1"/><line x1="406.5" y1="72" x2="406.5" y2="96" stroke="#747474" stroke-width="1"/><text x="409.5" y="82" font-size="10" fill="#a8a8a8" font-family="Liberation Sans">14</text><line x1="435.5" y1="88" x2="435.5" y2="96" stroke="#747474" stroke-width="1"/><line x1="463.5" y1="72" x2="463.5" y2="96" stroke="#747474" stroke-width="1"/><text x="466.5" y="82" font-size="10" fill="#a8a8a8" font-family="Liberation Sans">16</text><line x1="491.5" y1="88" x2="491.5" y2="96" stroke="#747474" stroke-width="1"/><line x1="520.5" y1="72" x2="520.5" y2="96" stroke="#747474" stroke-width="1"/><text x="523.5" y="82" font-size="10" fill="#a8a8a8" font-family="Liberation Sans">18</text><line x1="548.5" y1="88" x2="548.5" y2="96" stroke="#747474" stroke-width="1"/><line x1="576.5" y1="72" x2="576.5" y2="96" stroke="#747474" stroke-width="1"/><text x="579.5" y="82" font-size="10" fill="#a8a8a8" font-family="Liberation Sans">20</text><line x1="605.5" y1="88" x2="605.5" y2="96" stroke="#747474" stroke-width="1"/><line x1="633.5" y1="72" x2="633.5" y2="96" stroke="#747474" stroke-width="1"/><text x="636.5" y="82" font-size="10" fill="#a8a8a8" font-family="Liberation Sans">22</text><line x1="661.5" y1="88" x2="661.5" y2="96" stroke="#747474" stroke-width="1"/><line x1="690.5" y1="72" x2="690.5" y2="96" stroke="#747474" stroke-width="1"/><text x="693.5" y="82" font-size="10" fill="#a8a8a8" font-family="Liberation Sans">24</text><line x1="718.5" y1="88" x2="718.5" y2="96" stroke="#747474" stroke-width="1"/><line x1="746.5" y1="72" x2="746.5" y2="96" stroke="#747474" stroke-width="1"/><text x="749.5" y="82" font-size="10" fill="#a8a8a8" font-family="Liberation Sans">26</text><line x1="775.5" y1="88" x2="775.5" y2="96" stroke="#747474" stroke-width="1"/><line x1="803.5" y1="72" x2="803.5" y2="96" stroke="#747474" stroke-width="1"/><text x="806.5" y="82" font-size="10" fill="#a8a8a8" font-family="Liberation Sans">28</text><line x1="831.5" y1="88" x2="831.5" y2="96" stroke="#747474" stroke-width="1"/><line x1="860.5" y1="72" x2="860.5" y2="96" stroke="#747474" stroke-width="1"/><text x="863.5" y="82" font-size="10" fill="#a8a8a8" font-family="Liberation Sans">30</text><line x1="888.5" y1="88" x2="888.5" y2="96" stroke="#747474" stroke-width="1"/><line x1="916.5" y1="72" x2="916.5" y2="96" stroke="#747474" stroke-width="1"/><text x="919.5" y="82" font-size="10" fill="#a8a8a8" font-family="Liberation Sans">32</text><line x1="945.5" y1="88" x2="945.5" y2="96" stroke="#747474" stroke-width="1"/><line x1="973.5" y1="72" x2="973.5" y2="96" stroke="#747474" stroke-width="1"/><text x="976.5" y="82" font-size="10" fill="#a8a8a8" font-family="Liberation Sans">34</text><line x1="1001.5" y1="88" x2="1001.5" y2="96" stroke="#747474" stroke-width="1"/><line x1="1030.5" y1="72" x2="1030.5" y2="96" stroke="#747474" stroke-width="1"/><text x="1033.5" y="82" font-size="10" fill="#a8a8a8" font-family="Liberation Sans">36</text><line x1="1058.5" y1="88" x2="1058.5" y2="96" stroke="#747474" stroke-width="1"/><line x1="1086.5" y1="72" x2="1086.5" y2="96" stroke="#747474" stroke-width="1"/><text x="1089.5" y="82" font-size="10" fill="#a8a8a8" font-family="Liberation Sans">38</text><line x1="1115.5" y1="88" x2="1115.5" y2="96" stroke="#747474" stroke-width="1"/><line x1="217" y1="198.5" x2="1137" y2="198.5" stroke="#3a3a3a" stroke-width="1"/><line x1="217" y1="470.5" x2="1137" y2="470.5" stroke="#3a3a3a" stroke-width="1"/><line x1="690.5" y1="97" x2="690.5" y2="552" stroke="#3a3a3a" stroke-width="1"/><text x="244.7" y="204" font-size="12" fill="#a8a8a8" stroke="#a8a8a8" stroke-width="0.45" font-family="Liberation Serif" textLength="13.3" lengthAdjust="spacingAndGlyphs">10</text><text x="252.6" y="333" font-size="12" fill="#a8a8a8" stroke="#a8a8a8" stroke-width="0.45" font-family="Liberation Serif" textLength="6.4" lengthAdjust="spacingAndGlyphs">0</text><text x="237.6" y="461" font-size="12" fill="#a8a8a8" stroke="#a8a8a8" stroke-width="0.45" font-family="Liberation Serif" textLength="20.5" lengthAdjust="spacingAndGlyphs">-10</text><line x1="217" y1="334.6" x2="1137" y2="334.6" stroke="#5a7fc0" stroke-width="1.6"/><line x1="217" y1="321" x2="1137" y2="321" stroke="#4e6a9a" stroke-width="2"/><path d="M690.7,321 C702,318.8 710,318.2 719.1,318.4 C728,318.6 738,319.8 747.5,321.5" fill="none" stroke="#5d86c8" stroke-width="1.1"/><path d="M690.7,321.4 C702,323.5 710,323.9 719.1,323.8 C728,323.7 738,322.3 747.5,320.6" fill="none" stroke="#24b03c" stroke-width="1.2"/><path d="M692,321.1 C705,320.8 735,320.8 746,321.1" fill="none" stroke="#8c8c8c" stroke-width="1.1"/><path d="M747.5,320.1 L1040,321" fill="none" stroke="#26a83a" stroke-width="1.1"/><path d="M750,321.6 L860,321.8" fill="none" stroke="#8a9090" stroke-width="0.9"/><path d="M217,171.6 L293.5,171.6 C495.8,171.6 542.9,242.1 690.7,299.5 L714.5,318.7 M723.4,318.7 L747.5,306.2 C866.7,270.4 876.1,228.9 1059.5,225.9 C1085,225.9 1115,227.5 1137,229.4" fill="none" stroke="#20bb38" stroke-width="1.15"/><path d="M293.5,172 L644.8,272.8 L647.8,269.8 C655,269.3 665,270 690.7,274.3 L719.1,275.8 L747.5,278.3 L1059.5,301 L1137,306.8" fill="none" stroke="#d83140" stroke-width="1.15"/><rect x="289.8" y="168.05" width="7.5" height="7.5" fill="#ee7a2e"/><rect x="291.8" y="170" width="1.4" height="3.5" rx="0.7" fill="#1e1e1e"/><rect x="290.85" y="331.8" width="5.4" height="5.4" fill="#262a2e" stroke="#ee7a2e" stroke-width="2.1"/><rect x="688.03" y="331.8" width="5.4" height="5.4" fill="#262a2e" stroke="#ee7a2e" stroke-width="2.1"/><rect x="716.4" y="331.8" width="5.4" height="5.4" fill="#262a2e" stroke="#ee7a2e" stroke-width="2.1"/><rect x="744.77" y="331.8" width="5.4" height="5.4" fill="#262a2e" stroke="#ee7a2e" stroke-width="2.1"/><rect x="1056.84" y="331.8" width="5.4" height="5.4" fill="#262a2e" stroke="#ee7a2e" stroke-width="2.1"/><rect x="290.85" y="318.3" width="5.4" height="5.4" fill="#262a2e" stroke="#ee7a2e" stroke-width="2.1"/><rect x="688.03" y="318.3" width="5.4" height="5.4" fill="#262a2e" stroke="#ee7a2e" stroke-width="2.1"/><rect x="1056.84" y="318.3" width="5.4" height="5.4" fill="#262a2e" stroke="#ee7a2e" stroke-width="2.1"/><rect x="688.03" y="296.8" width="5.4" height="5.4" fill="#262a2e" stroke="#ee7a2e" stroke-width="2.1"/><rect x="688.03" y="271.5" width="5.4" height="5.4" fill="#262a2e" stroke="#ee7a2e" stroke-width="2.1"/><rect x="716.4" y="272.90000000000003" width="5.4" height="5.4" fill="#262a2e" stroke="#ee7a2e" stroke-width="2.1"/><rect x="744.77" y="275.5" width="5.4" height="5.4" fill="#262a2e" stroke="#ee7a2e" stroke-width="2.1"/><rect x="744.77" y="303.5" width="5.4" height="5.4" fill="#262a2e" stroke="#ee7a2e" stroke-width="2.1"/><rect x="1056.84" y="298.3" width="5.4" height="5.4" fill="#262a2e" stroke="#ee7a2e" stroke-width="2.1"/><rect x="715" y="314.6" width="8" height="13" fill="#ee7a2e"/><rect x="717.4" y="317" width="3.2" height="3.2" fill="#262a2e"/><rect x="743.7" y="316" width="7.4" height="10" fill="#ee7a2e"/><rect x="745.8" y="318" width="3.2" height="1.2" fill="#262a2e"/><rect x="745.8" y="320.8" width="3.2" height="3.2" fill="#262a2e"/><rect x="1055.79" y="222.15" width="7.5" height="7.5" fill="#ee7a2e"/><path d="M1136.3,548.4 L1136.3,551 L1133.7,551 Z" fill="#e0e0e0"/><line x1="1058.5" y1="93" x2="1058.5" y2="552" stroke="#ffff00" stroke-width="1"/><path d="M1046,71 L1071,71 L1071,85 L1058.5,93.5 L1046,85 Z" fill="#ffff00"/><text x="1050.5" y="82.9" font-size="11.5" font-weight="bold" fill="#000" font-family="Liberation Sans" textLength="13.5" lengthAdjust="spacing">37</text></svg>
</div></body></html>
